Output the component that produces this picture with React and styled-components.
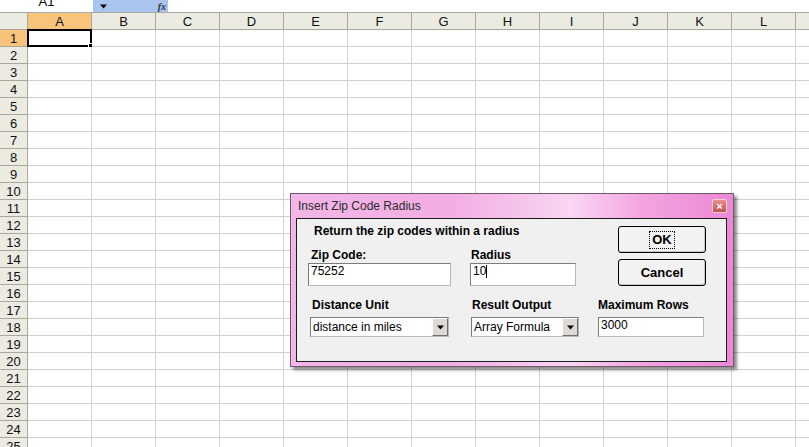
import styled, { createGlobalStyle } from "styled-components";

const GlobalStyle = createGlobalStyle`
  html, body {
    margin: 0;
    padding: 0;
  }
  body {
    width: 809px;
    height: 447px;
    overflow: hidden;
    background: #fff;
    font-family: "Liberation Sans", Arial, sans-serif;
  }
`;

const Screen = styled.div`
  position: relative;
  width: 809px;
  height: 447px;
  overflow: hidden;
`;

const FormulaBar = styled.div`
  display: flex;
  height: 12px;
  border-bottom: 1px solid #a8a8a8;
  overflow: hidden;
`;

const NameBox = styled.div`
  width: 93px;
  font-size: 13px;
  line-height: 4px;
  text-align: center;
  color: #000;
`;

const BlueStrip = styled.div`
  width: 75px;
  background: #a9c4ef;
  display: flex;
  align-items: center;
  justify-content: space-between;
  padding: 0 2px 0 7px;
  box-sizing: border-box;
`;

const Fx = styled.span`
  font-family: "Liberation Serif", serif;
  font-style: italic;
  font-weight: bold;
  font-size: 10px;
  color: #333;
`;

const FormulaInput = styled.div`
  flex: 1;
  background: #fff;
`;

const Grid = styled.div`
  display: grid;
  grid-template-columns: 28px repeat(13, 64px);
  grid-auto-rows: 17px;
`;

const HeadCell = styled.div`
  box-sizing: border-box;
  background: ${(p) => (p.$active ? "#f8c47b" : "#ecebe1")};
  border-right: 1px solid #aca899;
  border-bottom: 1px solid #aca899;
  font-size: 13px;
  color: #111;
  display: flex;
  align-items: center;
  justify-content: center;
`;

const Cell = styled.div`
  box-sizing: border-box;
  position: relative;
  background: #fff;
  border-right: 1px solid #d0d0d0;
  border-bottom: 1px solid #d0d0d0;
`;

const Selection = styled.div`
  position: absolute;
  left: -1px;
  top: -1px;
  right: -1px;
  bottom: -1px;
  border: 2px solid #000;

  &::after {
    content: "";
    position: absolute;
    right: -4px;
    bottom: -4px;
    width: 4px;
    height: 4px;
    background: #000;
    border: 1px solid #fff;
  }
`;

const Dialog = styled.div`
  position: absolute;
  left: 290px;
  top: 193px;
  width: 444px;
  height: 174px;
  box-sizing: border-box;
  display: flex;
  flex-direction: column;
  padding: 0 6px 4px 5px;
  border: 1px solid #6d5a6d;
  background: linear-gradient(
    90deg,
    #f2b6e7 0%,
    #f2ade3 35%,
    #f7c8ed 55%,
    #fad6f2 63%,
    #f3a3e0 80%,
    #ec88d7 100%
  );
  box-shadow: 3px 3px 3px rgba(0, 0, 0, 0.45);
`;

const TitleBar = styled.div`
  height: 24px;
  display: flex;
  align-items: center;
  justify-content: space-between;
  padding-left: 2px;
`;

const Title = styled.span`
  font-size: 12px;
  color: #2a2a2a;
`;

const CloseButton = styled.div`
  width: 15px;
  height: 14px;
  box-sizing: border-box;
  border: 1px solid #f4d0d4;
  border-radius: 2px;
  background: linear-gradient(180deg, #e69090, #c4524f);
  display: flex;
  align-items: center;
  justify-content: center;
  color: #fff;
  font-size: 11px;
  font-weight: bold;
  line-height: 1;
`;

const Body = styled.div`
  flex: 1;
  box-sizing: border-box;
  border: 1px solid #1c1c1c;
  background: #f0f0f0;
  padding: 5px 0 0 11px;
  display: flex;
  flex-direction: column;
`;

const TopSection = styled.div`
  display: flex;
`;

const LeftPart = styled.div`
  width: 268px;
  display: flex;
  flex-direction: column;
`;

const Heading = styled.div`
  margin-left: 6px;
  font-size: 12px;
  font-weight: bold;
  line-height: 14px;
  color: #000;
`;

const FieldRow = styled.div`
  display: flex;
  margin-top: ${(p) => p.$top}px;
`;

const Field = styled.div`
  width: ${(p) => p.$width}px;
  margin-left: ${(p) => p.$gap || 0}px;
  display: flex;
  flex-direction: column;
`;

const Label = styled.div`
  margin-left: ${(p) => p.$indent || 0}px;
  margin-bottom: ${(p) => p.$space}px;
  font-size: 12px;
  font-weight: bold;
  line-height: 14px;
  color: #000;
`;

const TextBox = styled.div`
  height: ${(p) => p.$height}px;
  box-sizing: border-box;
  background: #fff;
  border: 1px solid;
  border-color: #7c7c7c #b8b8b8 #b8b8b8 #7c7c7c;
  padding-left: 2px;
  font-size: 12px;
  line-height: 14px;
  color: #000;
  display: flex;
  align-items: flex-start;
`;

const Caret = styled.span`
  display: inline-block;
  width: 1px;
  height: 13px;
  margin-top: 1px;
  background: #000;
`;

const SelectBox = styled.div`
  height: 20px;
  box-sizing: border-box;
  background: #fff;
  border: 1px solid;
  border-color: #7c7c7c #b8b8b8 #b8b8b8 #7c7c7c;
  display: flex;
  align-items: stretch;
  font-size: 12px;
  color: #000;
`;

const SelectText = styled.span`
  flex: 1;
  padding-left: 2px;
  line-height: 18px;
`;

const DropButton = styled.span`
  width: 16px;
  box-sizing: border-box;
  background: #dcdad2;
  border: 1px solid;
  border-color: #fff #6f6f6f #6f6f6f #fff;
  display: flex;
  align-items: center;
  justify-content: center;
`;

const Buttons = styled.div`
  margin-left: 42px;
  margin-top: 2px;
  display: flex;
  flex-direction: column;
  gap: 6px;
`;

const Button = styled.div`
  width: 88px;
  height: 27px;
  box-sizing: border-box;
  border: 1px solid #000;
  border-radius: 3px;
  background: #f2f2f2;
  box-shadow: inset -1px -1px 0 #c8c8c8;
  display: flex;
  align-items: center;
  justify-content: center;
  font-size: 13px;
  font-weight: bold;
  color: #000;
`;

const Focus = styled.span`
  padding: 1px 2px;
  outline: 1px dotted #000;
  line-height: 14px;
`;

const Arrow = ({ size = 7 }) => (
  <svg width={size} height={Math.ceil(size / 2) + 1} viewBox="0 0 7 4">
    <path d="M0 0h7L3.5 4z" fill="#000" />
  </svg>
);

const COLS = ["A", "B", "C", "D", "E", "F", "G", "H", "I", "J", "K", "L", "M"];
const ROWS = Array.from({ length: 25 }, (_, i) => i + 1);

function Sheet() {
  return (
    <Grid>
      <HeadCell />
      {COLS.map((c) => (
        <HeadCell key={c} $active={c === "A"}>
          {c}
        </HeadCell>
      ))}
      {ROWS.map((r) => [
        <HeadCell key={`h${r}`} $active={r === 1}>
          {r}
        </HeadCell>,
        ...COLS.map((c) => (
          <Cell key={`${c}${r}`}>{c === "A" && r === 1 && <Selection />}</Cell>
        )),
      ])}
    </Grid>
  );
}

function ZipDialog() {
  return (
    <Dialog>
      <TitleBar>
        <Title>Insert Zip Code Radius</Title>
        <CloseButton>×</CloseButton>
      </TitleBar>
      <Body>
        <TopSection>
          <LeftPart>
            <Heading>Return the zip codes within a radius</Heading>
            <FieldRow $top={10}>
              <Field $width={143}>
                <Label $indent={3} $space={1}>Zip Code:</Label>
                <TextBox $height={23}>75252</TextBox>
              </Field>
              <Field $width={106} $gap={19}>
                <Label $indent={1} $space={1}>Radius</Label>
                <TextBox $height={23}>
                  10
                  <Caret />
                </TextBox>
              </Field>
            </FieldRow>
          </LeftPart>
          <Buttons>
            <Button>
              <Focus>OK</Focus>
            </Button>
            <Button>Cancel</Button>
          </Buttons>
        </TopSection>
        <FieldRow $top={12}>
          <Field $width={139} $gap={2}>
            <Label $indent={2} $space={5}>Distance Unit</Label>
            <SelectBox>
              <SelectText>distance in miles</SelectText>
              <DropButton>
                <Arrow />
              </DropButton>
            </SelectBox>
          </Field>
          <Field $width={108} $gap={22}>
            <Label $indent={1} $space={5}>Result Output</Label>
            <SelectBox>
              <SelectText>Array Formula</SelectText>
              <DropButton>
                <Arrow />
              </DropButton>
            </SelectBox>
          </Field>
          <Field $width={106} $gap={19}>
            <Label $space={5}>Maximum Rows</Label>
            <TextBox $height={20}>3000</TextBox>
          </Field>
        </FieldRow>
      </Body>
    </Dialog>
  );
}

export default function App() {
  return (
    <Screen>
      <GlobalStyle />
      <FormulaBar>
        <NameBox>A1</NameBox>
        <BlueStrip>
          <Arrow />
          <Fx>fx</Fx>
        </BlueStrip>
        <FormulaInput />
      </FormulaBar>
      <Sheet />
      <ZipDialog />
    </Screen>
  );
}
